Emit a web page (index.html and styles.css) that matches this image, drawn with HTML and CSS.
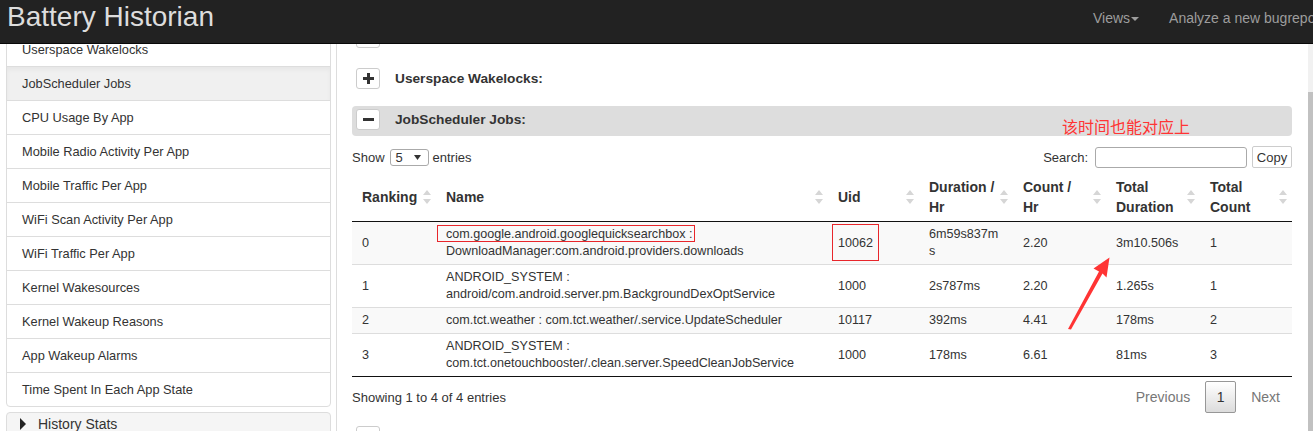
FILE: index.html
```html
<!DOCTYPE html>
<html lang="en">
<head>
    <meta charset="UTF-8">
    <title>Battery Historian</title>
    <link rel="stylesheet" href="styles.css">
</head>
<body>

    <!-- Top bar -->
    <nav class="navbar">
        <div class="brand">Battery Historian</div>
        <ul class="nav-links">
            <li>Views<span class="caret"></span></li>
            <li>Analyze a new bugreport</li>
        </ul>
    </nav>

    <div class="layout">
        <!-- Left column: section list -->
        <div class="sidebar">
            <div class="list-panel">
                <div class="list-item">Userspace Wakelocks</div>
                <div class="list-item active">JobScheduler Jobs</div>
                <div class="list-item">CPU Usage By App</div>
                <div class="list-item">Mobile Radio Activity Per App</div>
                <div class="list-item">Mobile Traffic Per App</div>
                <div class="list-item">WiFi Scan Activity Per App</div>
                <div class="list-item">WiFi Traffic Per App</div>
                <div class="list-item">Kernel Wakesources</div>
                <div class="list-item">Kernel Wakeup Reasons</div>
                <div class="list-item">App Wakeup Alarms</div>
                <div class="list-item">Time Spent In Each App State</div>
            </div>
            <div class="stats-panel"><span class="tri"></span>History Stats</div>
        </div>

        <!-- Right column: tables -->
        <div class="main">
            <div class="section-row">
                <span class="toggle"><svg width="11" height="11" viewBox="0 0 11 11"><path d="M4 0h3v4h4v3H7v4H4V7H0V4h4z" fill="#333"/></svg></span>
            </div>

            <div class="section-row">
                <span class="toggle"><svg width="11" height="11" viewBox="0 0 11 11"><path d="M4 0h3v4h4v3H7v4H4V7H0V4h4z" fill="#333"/></svg></span>
                <h4>Userspace Wakelocks:</h4>
            </div>

            <div class="section-row open">
                <span class="toggle"><svg width="11" height="11" viewBox="0 0 11 11"><rect x="0" y="4" width="11" height="3" fill="#333"/></svg></span>
                <h4>JobScheduler Jobs:</h4>
                <span class="note">该时间也能对应上</span>
            </div>

            <div class="dt-top">
                <div class="dt-length">
                    Show
                    <span class="select">5<svg width="7" height="5" viewBox="0 0 7 5"><path d="M0 0H7L3.5 5Z" fill="#333"/></svg></span>
                    entries
                </div>
                <div class="dt-search">
                    Search:
                    <input type="text" class="search-input">
                    <button class="copy-btn">Copy</button>
                </div>
            </div>

            <table class="jobs">
                <colgroup>
                    <col style="width: 84px">
                    <col style="width: 392px">
                    <col style="width: 91px">
                    <col style="width: 94px">
                    <col style="width: 93px">
                    <col style="width: 94px">
                    <col style="width: 92px">
                </colgroup>
                <thead>
                    <tr>
                        <th class="nowrap">Ranking<svg class="sort" width="8" height="14" viewBox="0 0 8 14"><path d="M4 0L8 5H0Z M0 9H8L4 14Z" fill="#d6d6d6"/></svg></th>
                        <th>Name<svg class="sort" width="8" height="14" viewBox="0 0 8 14"><path d="M4 0L8 5H0Z M0 9H8L4 14Z" fill="#d6d6d6"/></svg></th>
                        <th>Uid<svg class="sort" width="8" height="14" viewBox="0 0 8 14"><path d="M4 0L8 5H0Z M0 9H8L4 14Z" fill="#d6d6d6"/></svg></th>
                        <th>Duration / Hr<svg class="sort" width="8" height="14" viewBox="0 0 8 14"><path d="M4 0L8 5H0Z M0 9H8L4 14Z" fill="#d6d6d6"/></svg></th>
                        <th>Count / Hr<svg class="sort" width="8" height="14" viewBox="0 0 8 14"><path d="M4 0L8 5H0Z M0 9H8L4 14Z" fill="#d6d6d6"/></svg></th>
                        <th>Total Duration<svg class="sort" width="8" height="14" viewBox="0 0 8 14"><path d="M4 0L8 5H0Z M0 9H8L4 14Z" fill="#d6d6d6"/></svg></th>
                        <th>Total Count<svg class="sort" width="8" height="14" viewBox="0 0 8 14"><path d="M4 0L8 5H0Z M0 9H8L4 14Z" fill="#d6d6d6"/></svg></th>
                    </tr>
                </thead>
                <tbody>
                    <tr class="odd">
                        <td>0</td>
                        <td class="marked">com.google.android.googlequicksearchbox : DownloadManager:com.android.providers.downloads<span class="mark-box name-box"></span></td>
                        <td class="marked">10062<span class="mark-box uid-box"></span></td>
                        <td>6m59s837ms</td>
                        <td>2.20</td>
                        <td>3m10.506s</td>
                        <td>1</td>
                    </tr>
                    <tr>
                        <td>1</td>
                        <td>ANDROID_SYSTEM : android/com.android.server.pm.BackgroundDexOptService</td>
                        <td>1000</td>
                        <td>2s787ms</td>
                        <td>2.20</td>
                        <td>1.265s</td>
                        <td>1</td>
                    </tr>
                    <tr class="odd">
                        <td>2</td>
                        <td>com.tct.weather : com.tct.weather/.service.UpdateScheduler</td>
                        <td>10117</td>
                        <td>392ms</td>
                        <td>4.41</td>
                        <td>178ms</td>
                        <td>2</td>
                    </tr>
                    <tr>
                        <td>3</td>
                        <td>ANDROID_SYSTEM : com.tct.onetouchbooster/.clean.server.SpeedCleanJobService</td>
                        <td>1000</td>
                        <td>178ms</td>
                        <td>6.61</td>
                        <td>81ms</td>
                        <td>3</td>
                    </tr>
                </tbody>
            </table>

            <div class="dt-bottom">
                <div class="dt-info">Showing 1 to 4 of 4 entries</div>
                <div class="pager">
                    <span class="pg">Previous</span>
                    <span class="pg current">1</span>
                    <span class="pg next">Next</span>
                </div>
            </div>

            <div class="section-row last">
                <span class="toggle"></span>
            </div>
        </div>
    </div>

    <!-- fake scrollbar -->
    <div class="scrollbar"><div class="thumb"></div></div>

    <!-- annotation arrow -->
    <svg class="arrow" width="50" height="80" viewBox="1064 254 50 80">
        <polygon points="1109.5,257.5 1093.5,268.5 1099,271.5 1068,329 1071,329.5 1102.5,273.5 1106.5,277.5" fill="#ff3434"/>
    </svg>

</body>
</html>
```

FILE: styles.css
```css
/* Base */
html, body {
    height: 100%;
    overflow: hidden;
}

body {
    margin: 0;
    font-family: "Liberation Sans", Arial, sans-serif;
    font-size: 13px;
    color: #333;
    background: #fff;
}

/* Navbar */
.navbar {
    position: fixed;
    top: 0;
    left: 0;
    right: 0;
    height: 43px;
    background: #222;
    border-bottom: 1px solid #080808;
    display: flex;
    overflow: hidden;
    white-space: nowrap;
    z-index: 10;
}

.brand {
    flex: 0 0 1078px;
    box-sizing: border-box;
    padding-left: 7px;
    font-size: 28px;
    line-height: 34px;
    color: #ddd;
}

.nav-links {
    display: flex;
    list-style: none;
    margin: 0;
    padding: 0;
    flex-shrink: 0;
}

.nav-links li {
    padding: 8px 15px 0;
    font-size: 14px;
    line-height: 20px;
    color: #9d9d9d;
}

.caret {
    display: inline-block;
    width: 0;
    height: 0;
    margin-left: 1px;
    vertical-align: middle;
    border-top: 4px solid #9d9d9d;
    border-left: 4px solid transparent;
    border-right: 4px solid transparent;
}

/* Layout */
.layout {
    display: flex;
    width: calc(100% - 5px);
    height: 100%;
}

.sidebar {
    flex: 0 0 auto;
    width: 325px;
    padding: 32px 5px 0 6px;
    border-right: 1px solid #ddd;
}

.list-panel {
    border: 1px solid #ddd;
    border-radius: 4px;
    background: #fff;
}

.list-item {
    padding: 8px 15px;
    font-size: 12.8px;
    line-height: 17px;
    border-top: 1px solid #ddd;
}

.list-item:first-child {
    border-top: 0;
}

.list-item.active {
    background: #f0f0f0;
    box-shadow: inset 0 3px 4px rgba(0, 0, 0, 0.04);
}

.stats-panel {
    margin-top: 5px;
    padding: 1px 13px 4px;
    font-size: 14px;
    line-height: 20px;
    background: #f5f5f5;
    border: 1px solid #ddd;
    border-radius: 4px;
}

.tri {
    display: inline-block;
    width: 0;
    height: 0;
    margin-right: 12px;
    vertical-align: -1px;
    border-left: 6px solid #222;
    border-top: 6px solid transparent;
    border-bottom: 6px solid transparent;
}

/* Main column */
.main {
    flex: 1;
    min-width: 0;
    padding: 24px 16px 0 15px;
}

.section-row {
    position: relative;
    display: flex;
    align-items: flex-start;
    height: 30px;
    box-sizing: border-box;
    padding: 3px 4px 0;
    margin-bottom: 11px;
    border-radius: 4px;
}

.section-row.open {
    background: #ddd;
    margin-bottom: 10px;
}

.section-row.last {
    margin-top: 10px;
}

.toggle {
    width: 22px;
    height: 19px;
    border: 1px solid #ccc;
    border-radius: 3px;
    background: #fff;
    display: flex;
    align-items: center;
    justify-content: center;
}

.section-row h4 {
    margin: 0 0 0 15px;
    font-size: 13.7px;
    line-height: 21px;
    font-weight: bold;
}

.note {
    position: absolute;
    left: 710px;
    top: 10px;
    font-family: "Noto Sans CJK SC", sans-serif;
    font-size: 16px;
    line-height: 20px;
    color: #ff3434;
}

/* Table controls */
.dt-top {
    display: flex;
    justify-content: space-between;
    align-items: center;
    height: 22px;
    margin-bottom: 5px;
}

.dt-length, .dt-search {
    display: flex;
    align-items: center;
}

.select {
    display: inline-flex;
    align-items: center;
    justify-content: space-between;
    box-sizing: border-box;
    width: 39px;
    height: 17px;
    margin: 0 4px 0 5px;
    padding: 0 7px 0 5px;
    border: 1px solid #aaa;
    border-radius: 3px;
    font-size: 13px;
}

.search-input {
    box-sizing: border-box;
    width: 152px;
    height: 21px;
    margin-left: 7px;
    border: 1px solid #aaa;
    border-radius: 3px;
    padding: 0 4px;
}

.copy-btn {
    box-sizing: border-box;
    width: 40px;
    height: 22px;
    margin-left: 5px;
    padding: 0;
    border: 1px solid #ccc;
    border-radius: 2px;
    background: #fff;
    font-family: inherit;
    font-size: 13px;
    color: #333;
}

/* Table */
.jobs {
    width: 100%;
    table-layout: fixed;
    border-collapse: separate;
    border-spacing: 0;
}

.jobs th {
    position: relative;
    text-align: left;
    font-size: 14px;
    line-height: 20px;
    padding: 4px 18px 4px 10px;
    vertical-align: middle;
    border-bottom: 1px solid #111;
}

.jobs th.nowrap {
    white-space: nowrap;
}

.sort {
    position: absolute;
    right: 5px;
    top: 50%;
    margin-top: -7px;
}

.jobs td {
    position: relative;
    padding: 4px 10px;
    font-size: 12.6px;
    line-height: 17px;
    vertical-align: middle;
    border-top: 1px solid #ddd;
    overflow-wrap: anywhere;
}

.jobs tbody tr:first-child td {
    border-top: 0;
}

.jobs tbody tr:last-child td {
    border-bottom: 1px solid #111;
}

.jobs tr.odd td {
    background: #f9f9f9;
}

.mark-box {
    position: absolute;
    box-sizing: border-box;
    border: 1px solid #e8262b;
}

.name-box {
    left: 1px;
    top: 3px;
    width: 258px;
    height: 17px;
}

.uid-box {
    left: 4px;
    top: 2px;
    width: 47px;
    height: 37px;
}

/* Table footer */
.dt-bottom {
    display: flex;
    justify-content: space-between;
    align-items: center;
    margin-top: 4px;
    height: 32px;
}

.pager {
    display: flex;
    align-items: center;
}

.pg {
    padding: 0 15px;
    font-size: 14px;
    color: #777;
}

.pg.current {
    box-sizing: border-box;
    width: 31px;
    height: 32px;
    padding: 0;
    display: flex;
    align-items: center;
    justify-content: center;
    color: #333;
    border: 1px solid #979797;
    border-radius: 2px;
    background: linear-gradient(#fff, #dcdcdc);
}

.pg.next {
    padding: 0 12px 0 15px;
}

/* Scrollbar and annotation */
.scrollbar {
    position: fixed;
    top: 44px;
    right: 0;
    bottom: 0;
    width: 5px;
    background: #f1f1f1;
}

.thumb {
    margin-top: 48px;
    height: 400px;
    background: #c1c1c1;
}

.arrow {
    position: absolute;
    left: 1064px;
    top: 254px;
}
```
